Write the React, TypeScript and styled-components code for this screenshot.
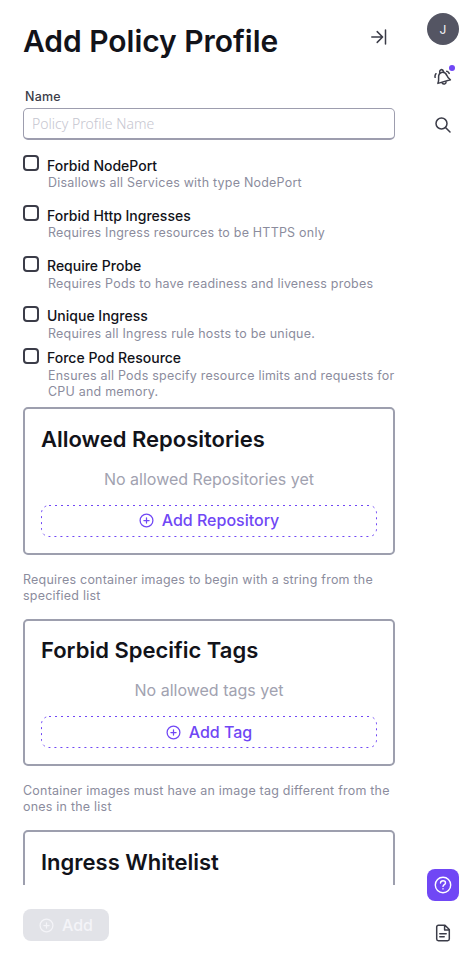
import React from "react";
import styled, { createGlobalStyle } from "styled-components";

const GlobalStyle = createGlobalStyle`
  *, *::before, *::after { box-sizing: border-box; }
  body { margin: 0; background: #fff; font-family: Inter, sans-serif; color: #12131a; }
  button, input { font-family: inherit; }
`;

const Page = styled.div`
  display: flex;
  height: 964px;
  width: 467px;
  overflow: hidden;
`;

const Panel = styled.main`
  width: 395px;
  padding-left: 23px;
  display: flex;
  flex-direction: column;
`;

const Header = styled.header`
  display: flex;
  justify-content: space-between;
  height: 89px;
  flex: none;
`;

const Title = styled.h1`
  margin: 21px 0 0;
  font-size: 30px;
  line-height: 40px;
  font-weight: 600;
  letter-spacing: -0.03px;
  white-space: nowrap;
`;

const CollapseButton = styled.button`
  border: 0;
  background: none;
  padding: 0;
  width: 32px;
  height: 32px;
  margin-top: 21px;
  display: flex;
  align-items: center;
  justify-content: center;
  color: #3b3c48;
`;

const FormScroll = styled.div`
  height: 796px;
  flex: none;
  overflow: hidden;
`;

const Field = styled.label`
  display: block;
  height: 66px;
`;

const FieldName = styled.span`
  display: block;
  padding-left: 2px;
  height: 19px;
  font-size: 12.48px;
  line-height: 16px;
  letter-spacing: 0.25px;
  font-weight: 500;
  color: #3b3c48;
`;

const TextInput = styled.input`
  display: block;
  width: 372px;
  height: 32px;
  border: 1px solid #9d9dae;
  border-bottom-width: 2px;
  border-radius: 5px;
  padding: 0 8px;
  outline: 0;
  background: #fff;
  font: 300 14px "Noto Sans", sans-serif;
  letter-spacing: 0.02px;
  &::placeholder { color: #c6c6d0; opacity: 1; }
`;

const CheckRow = styled.div<{ $height: number }>`
  display: grid;
  grid-template-columns: 16px 1fr;
  column-gap: 8px;
  height: ${(p) => p.$height}px;
`;

const CheckBox = styled.span`
  width: 16px;
  height: 16px;
  border: 2px solid #3b3c48;
  border-radius: 4px;
`;

const CheckLabel = styled.div`
  padding-top: 0.55px;
  font-size: 14px;
  line-height: 20px;
  font-weight: 500;
`;

const Hint = styled.p<{ $indent?: boolean }>`
  margin: ${(p) => (p.$indent ? "-0.55px 0 0 1px" : "1px 0 0")};
  font-size: 12.48px;
  line-height: 16px;
  font-weight: 400;
  letter-spacing: 0.23px;
  color: #8b8c9d;
  white-space: pre;
`;

const Card = styled.section`
  height: 147.2px;
  border: 2px solid #9d9fae;
  border-radius: 5px;
  padding: 14.8px 16px;
`;

const CardTitle = styled.h2`
  margin: 0 0 12px;
  font-size: 22px;
  line-height: 31px;
  font-weight: 600;
`;

const EmptyText = styled.p`
  margin: 0 0 14px;
  text-align: center;
  font-size: 16px;
  line-height: 24px;
  color: #a1a2b0;
`;

const DashedButton = styled.button`
  position: relative;
  display: flex;
  align-items: center;
  justify-content: center;
  gap: 8px;
  width: 100%;
  height: 32px;
  padding: 0 0 1.6px;
  border: 0;
  background: none;
  color: #7047f5;
  font-size: 16px;
  line-height: 24px;
  font-weight: 500;

  svg:not(:first-child) {
    margin-top: 1px;
  }
`;

const DashOutline = styled.svg`
  position: absolute;
  inset: 0;
`;

const CardHint = styled.div`
  padding-top: 16.6px;
  height: 64px;
`;

const Footer = styled.footer`
  padding-top: 24px;
`;

const SubmitButton = styled.button`
  display: flex;
  align-items: center;
  gap: 8px;
  width: 86px;
  height: 32px;
  border: 0;
  border-radius: 8px;
  padding: 0 16px;
  background: #e2e3e8;
  color: #f4f4f8;
  font-size: 16px;
  font-weight: 500;
`;

const Rail = styled.aside`
  width: 32px;
  margin-left: 32px;
  padding-top: 13px;
  display: flex;
  flex-direction: column;
  align-items: center;
`;

const Avatar = styled.div`
  width: 32px;
  height: 32px;
  border-radius: 50%;
  background: #545563;
  color: #f4f4f8;
  display: flex;
  align-items: center;
  justify-content: center;
  font-size: 12px;
  line-height: 16px;
  padding-top: 1px;
`;

const RailButton = styled.button<{ $filled?: boolean }>`
  position: relative;
  width: 32px;
  height: 32px;
  margin-top: 16px;
  padding: 0;
  border: 0;
  border-radius: 8px;
  display: flex;
  align-items: center;
  justify-content: center;
  background: ${(p) => (p.$filled ? "#7047f5" : "none")};
  color: ${(p) => (p.$filled ? "#fff" : "#3b3c48")};
`;

const Badge = styled.span`
  position: absolute;
  top: 4px;
  right: 4px;
  width: 6px;
  height: 6px;
  border-radius: 50%;
  background: #7047f5;
`;

const Spacer = styled.div`
  flex: 1;
`;

const RailBottom = styled.div`
  padding-bottom: 15px;
`;

const stroke = {
  fill: "none",
  stroke: "currentColor",
  strokeLinecap: "round",
  strokeLinejoin: "round",
} as const;

const PlusCircle = () => (
  <svg width="15" height="15" viewBox="0 0 15 15" strokeWidth="1.25" {...stroke}>
    <circle cx="7.5" cy="7.5" r="6.4" />
    <path d="M7.5 4.9v5.2M4.9 7.5h5.2" />
  </svg>
);

const CollapseIcon = () => (
  <svg width="16" height="16" viewBox="0 0 16 16" strokeWidth="1.5" {...stroke}>
    <path d="M.8 8h10.8M6.2 2.6l5.4 5.4-5.4 5.4M14.5 1v14" />
  </svg>
);

const BellIcon = () => (
  <svg width="18" height="18" viewBox="0 0 18 18" strokeWidth="1.5" {...stroke}>
    <path d="M3.9 15.4c1-2.2.8-3.9.7-5.7-.2-2.8.8-4.6 3-5.2 2.3-.6 4.3.7 5.3 3.1.7 1.9 1.5 3 3.5 4.2Z" />
    <path d="M5.9 5C5.4 3.1 5.9 2 7 1.7c1.2-.3 2.2.5 2.6 2M8.2 15c.6 1 1.4 1.3 2.4 1 1-.2 1.5-1 1.4-2M1.1 9.3c-.3-1.4 0-2.6.8-3.6M12.8 3.3c1.1.3 1.9 1 2.4 2.1" />
  </svg>
);

const SearchIcon = () => (
  <svg width="16" height="16" viewBox="0 0 16 16" strokeWidth="1.5" {...stroke}>
    <circle cx="6.5" cy="6.5" r="5.5" />
    <path d="m10.5 10.5 4.5 4.5" />
  </svg>
);

const HelpIcon = () => (
  <svg width="18" height="18" viewBox="0 0 18 18" strokeWidth="1.4" {...stroke}>
    <circle cx="9" cy="9" r="7.7" />
    <path d="M6.5 7c.1-1.4 1.1-2.2 2.5-2.2s2.5.8 2.5 2.1c0 1.7-2.5 1.7-2.5 3.5M9 12.8v.1" />
  </svg>
);

const DocumentIcon = () => (
  <svg width="16" height="18" viewBox="0 0 16 18" strokeWidth="1.5" {...stroke}>
    <path d="M10 1.2H3.4c-1 0-1.7.7-1.7 1.7v12.2c0 1 .7 1.7 1.7 1.7h9.2c1 0 1.7-.7 1.7-1.7V5.5ZM9.6 1.6V6h4.4M4.8 9.7h6.4M4.8 12.8h4.4" />
  </svg>
);

const checks = [
  { label: "Forbid NodePort", hint: "Disallows all Services with type NodePort", height: 50.3 },
  { label: "Forbid Http Ingresses", hint: "Requires Ingress resources to be HTTPS only", height: 50.3 },
  { label: "Require Probe", hint: "Requires Pods to have readiness and liveness probes", height: 50.3 },
  { label: "Unique Ingress", hint: "Requires all Ingress rule hosts to be unique.", height: 41.7 },
  {
    label: "Force Pod Resource",
    hint: "Ensures all Pods specify resource limits and requests for\nCPU and memory.",
    height: 59.8,
  },
];

const lists = [
  {
    title: "Allowed Repositories",
    empty: "No allowed Repositories yet",
    action: "Add Repository",
    hint: "Requires container images to begin with a string from the\nspecified list",
  },
  {
    title: "Forbid Specific Tags",
    empty: "No allowed tags yet",
    action: "Add Tag",
    hint: "Container images must have an image tag different from the\nones in the list",
  },
  { title: "Ingress Whitelist" },
];

export default function App() {
  return (
    <Page>
      <GlobalStyle />
      <Panel>
        <Header>
          <Title>Add Policy Profile</Title>
          <CollapseButton aria-label="Collapse">
            <CollapseIcon />
          </CollapseButton>
        </Header>
        <FormScroll>
          <Field>
            <FieldName>Name</FieldName>
            <TextInput placeholder="Policy Profile Name" />
          </Field>
          {checks.map((c) => (
            <CheckRow key={c.label} $height={c.height}>
              <CheckBox role="checkbox" aria-checked={false} />
              <div>
                <CheckLabel>{c.label}</CheckLabel>
                <Hint $indent>{c.hint}</Hint>
              </div>
            </CheckRow>
          ))}
          {lists.map((l) => (
            <React.Fragment key={l.title}>
              <Card>
                <CardTitle>{l.title}</CardTitle>
                {l.empty && <EmptyText>{l.empty}</EmptyText>}
                {l.action && (
                  <DashedButton>
                    <DashOutline width="336" height="32" fill="none" stroke="currentColor">
                      <rect x="0.5" y="0.5" width="335" height="31" rx="7.5" strokeDasharray="2 4" />
                    </DashOutline>
                    <PlusCircle />
                    {l.action}
                  </DashedButton>
                )}
              </Card>
              {l.hint && (
                <CardHint>
                  <Hint>{l.hint}</Hint>
                </CardHint>
              )}
            </React.Fragment>
          ))}
        </FormScroll>
        <Footer>
          <SubmitButton disabled>
            <PlusCircle />
            Add
          </SubmitButton>
        </Footer>
      </Panel>
      <Rail>
        <Avatar>J</Avatar>
        <RailButton aria-label="Notifications">
          <BellIcon />
          <Badge />
        </RailButton>
        <RailButton aria-label="Search">
          <SearchIcon />
        </RailButton>
        <Spacer />
        <RailBottom>
          <RailButton $filled aria-label="Help">
            <HelpIcon />
          </RailButton>
          <RailButton aria-label="Documentation">
            <DocumentIcon />
          </RailButton>
        </RailBottom>
      </Rail>
    </Page>
  );
}
